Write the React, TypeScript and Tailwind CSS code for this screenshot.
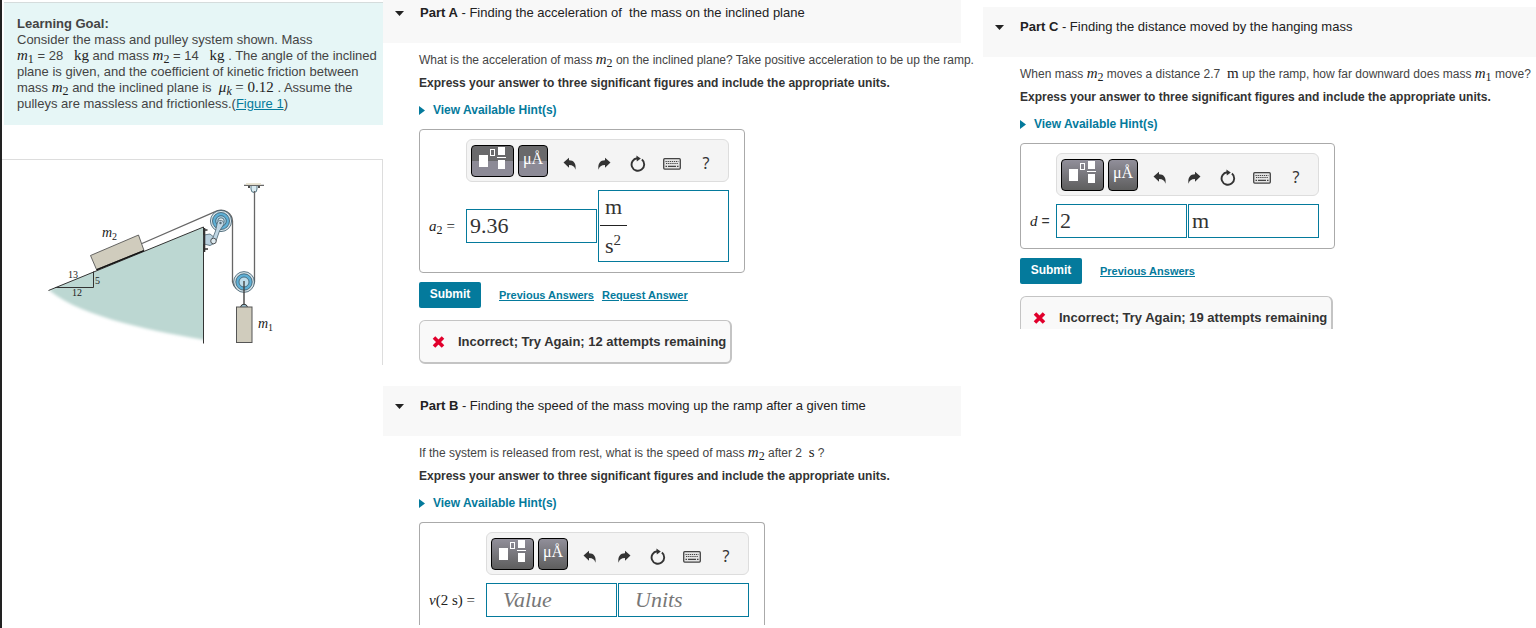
import type { ReactNode } from "react";

const MathText = ({ children }: { children: ReactNode }) => (
  <span className="font-['Liberation_Serif',serif] text-[15px] leading-none text-[#222]">
    {children}
  </span>
);

const Variable = ({ name, sub }: { name: string; sub?: ReactNode }) => (
  <span className="font-['Liberation_Serif',serif] text-[15px] leading-none text-[#222]">
    <i>{name}</i>
    {sub && <span className="relative top-[3px] text-[12px]">{sub}</span>}
  </span>
);

const UndoIcon = () => (
  <svg width="14" height="14" viewBox="0 0 14 14" fill="#333">
    <path d="M0.5 5.5 6 0.8V3.2C10.6 3.2 13.6 6.4 12.4 12.8 11.6 9.6 9.8 8.1 6 8.1V10.8Z" />
  </svg>
);

const RedoIcon = () => (
  <svg width="14" height="14" viewBox="0 0 14 14" fill="#333">
    <path d="M13.5 5.5 8 0.8V3.2C3.4 3.2 0.4 6.4 1.6 12.8 2.4 9.6 4.2 8.1 8 8.1V10.8Z" />
  </svg>
);

const ResetIcon = () => (
  <svg width="16" height="18" viewBox="0 0 16 18" fill="none">
    <path
      d="M11.9 4.6A6.3 6.3 0 1 1 7.2 3.2"
      stroke="#333"
      strokeWidth="1.9"
    />
    <path d="M6.4 0.4 10.8 3.4 6.8 6.4Z" fill="#333" />
  </svg>
);

const KeyboardIcon = () => (
  <svg width="18" height="12" viewBox="0 0 18 12" fill="none">
    <rect x="0.7" y="0.7" width="16.6" height="10.4" rx="1" fill="#e4e4e4" stroke="#444" strokeWidth="1.3" />
    <path d="M2.5 3.5H15.5M3 5.5H15.5" stroke="#444" strokeWidth="1.2" strokeDasharray="1.3 0.8" />
    <path d="M2.5 8.3H4M5 8.3H13M14 8.3H15.5" stroke="#444" strokeWidth="1.3" />
  </svg>
);

const TemplateIcon = () => (
  <svg width="28" height="24" viewBox="0 0 28 24" fill="none">
    <rect x="0" y="8" width="9" height="12" fill="#fff" />
    <rect x="11.5" y="2.5" width="4" height="6" stroke="#fff" />
    <rect x="19" y="0" width="7" height="8" fill="#fff" />
    <path d="M18 10.5H27" stroke="#fff" />
    <rect x="19" y="13" width="7" height="9" fill="#fff" />
  </svg>
);

const Toolbar = ({ active }: { active?: boolean }) => {
  const shade = active
    ? "bg-linear-to-b from-[#69696b] from-50% to-[#8c8a96] to-50%"
    : "bg-linear-to-b from-[#918f9a] to-[#5e5e5e]";
  return (
    <div className="flex h-[43px] w-[263px] items-center rounded-md border border-[#ddd] bg-[#f4f4f4] pl-1">
      <button
        aria-label="Templates"
        className={`mr-1 flex h-8 w-[43px] justify-center rounded border border-black pt-px ${shade}`}
      >
        <TemplateIcon />
      </button>
      <button
        aria-label="Symbols"
        className={`mr-[5px] h-8 w-[30px] rounded border border-black pb-1 font-['Liberation_Serif',serif] text-[16px] leading-[24px] text-white ${shade}`}
      >
        μÅ
      </button>
      {[
        { label: "Undo", icon: <UndoIcon /> },
        { label: "Redo", icon: <RedoIcon /> },
        { label: "Reset", icon: <ResetIcon /> },
        { label: "Keyboard shortcuts", icon: <KeyboardIcon /> },
      ].map(({ label, icon }) => (
        <button
          key={label}
          aria-label={label}
          className="flex h-8 w-[34px] items-center justify-center pt-[6px]"
        >
          {icon}
        </button>
      ))}
      <button
        aria-label="Help"
        className="h-8 w-[34px] pt-1 font-['Noto_Sans',sans-serif] text-[16px] leading-none text-[#333]"
      >
        ?
      </button>
    </div>
  );
};

const PartHeader = ({
  part,
  title,
  first,
}: {
  part: string;
  title: string;
  first?: boolean;
}) => (
  <header
    className={`flex items-center bg-[#f8f8f8] pb-[22px] pl-3 text-[13px] leading-4 whitespace-pre text-[#222] ${first ? "pt-[5px]" : "pt-3"}`}
  >
    <svg width="9" height="5" viewBox="0 0 9 5" className="mr-4">
      <path d="M0 0H9L4.5 5Z" fill="#222" />
    </svg>
    <h2>
      <b>{part}</b> - {title}
    </h2>
  </header>
);

const Instructions = ({ children }: { children: ReactNode }) => (
  <>
    <p className="mt-[9px] h-4 text-[12px] leading-4 whitespace-pre">{children}</p>
    <p className="mt-[7px] text-[12px] leading-4 font-bold whitespace-nowrap text-[#333]">
      Express your answer to three significant figures and include the
      appropriate units.
    </p>
    <button className="mt-[11px] flex items-center text-[12px] leading-4 font-bold text-[#047a9c]">
      <svg width="6" height="9" viewBox="0 0 6 9" className="mr-2">
        <path d="M0 0 6 4.5 0 9Z" fill="#047a9c" />
      </svg>
      View Available Hint(s)
    </button>
  </>
);

const AnswerField = ({
  id,
  label,
  labelWidth,
  value,
  unit,
  active,
  open,
}: {
  id: string;
  label: ReactNode;
  labelWidth: string;
  value?: string;
  unit?: ReactNode;
  active?: boolean;
  open?: boolean;
}) => {
  const box =
    "h-[34px] w-[131px] border border-[#047a9c] bg-white font-['Liberation_Serif',serif] text-[22px] text-[#333] outline-none placeholder:text-[#777] placeholder:italic placeholder:opacity-100";
  const pad = value ? "px-[3px]" : "px-4";
  return (
    <div
      className={`mt-[11px] grid w-fit grid-cols-[auto_auto] items-center gap-x-[7px] gap-y-2 border border-[#aaa] pt-[9px] pr-[15px] pl-[9px] ${open ? "rounded-t border-b-0 pb-2" : "rounded pb-[10px]"}`}
    >
      <div className="col-start-2">
        <Toolbar active={active} />
      </div>
      <label
        htmlFor={id}
        className={`text-[14px] leading-4 whitespace-nowrap text-[#333] ${labelWidth}`}
      >
        {label}
      </label>
      <div className="flex items-center gap-px">
        <input id={id} className={`${box} ${pad}`} defaultValue={value} placeholder="Value" />
        {typeof unit === "object" ? (
          unit
        ) : (
          <input
            aria-label="Units"
            className={`${box} ${pad}`}
            defaultValue={unit}
            placeholder="Units"
          />
        )}
      </div>
    </div>
  );
};

const FractionUnits = () => (
  <div
    role="textbox"
    aria-label="Units"
    tabIndex={0}
    className="h-[72px] w-[131px] border border-[#047a9c] px-px pt-1 font-['Liberation_Serif',serif] text-[22px] leading-[24px] text-[#333]"
  >
    <div className="w-fit border-b border-[#222] px-[5px] pb-[6px]">m</div>
    <div className="px-[5px] pt-2">
      s<span className="relative -top-2 text-[15px] leading-none">2</span>
    </div>
  </div>
);

const Actions = ({ links }: { links: string[] }) => (
  <div className="mt-[9px] flex items-center text-[#047a9c]">
    <button className="mr-[18px] h-[26px] w-[62px] rounded-xs bg-[#047a9c] pb-0.5 text-[12px] font-bold text-white">
      Submit
    </button>
    <div className="flex gap-2 text-[11px] leading-4 font-bold underline">
      {links.map((link) => (
        <a key={link} href="#">
          {link}
        </a>
      ))}
    </div>
  </div>
);

const Feedback = ({ attempts, cut }: { attempts: number; cut?: boolean }) => (
  <div
    className={`mt-3 flex w-[313px] items-center border border-[#c4c4c4] bg-[#f9f9f9] pl-3 text-[13px] font-bold whitespace-nowrap text-[#333] ${cut ? "h-[33px] rounded-t-md border-r-2 border-b-0 pt-[10px]" : "h-11 rounded-md border-r-2 border-b-2"}`}
  >
    <svg width="13" height="12" viewBox="0 0 13 12" className="mr-[13px]">
      <path d="M2 1.5 11 10.5M11 1.5 2 10.5" stroke="#e1002c" strokeWidth="3.6" />
    </svg>
    <p>Incorrect; Try Again; {attempts} attempts remaining</p>
  </div>
);

const PulleyFigure = () => (
  <svg
    width="260"
    height="200"
    viewBox="0 0 260 200"
    fill="none"
    className="mt-[10px] ml-7 font-['Liberation_Serif',serif]"
  >
    <defs>
      <filter id="soft" x="-10%" y="-10%" width="120%" height="120%">
        <feGaussianBlur stdDeviation="1.6" />
      </filter>
      <clipPath id="ramp">
        <path d="M18 120.5 173.5 57V180H0V120.5Z" />
      </clipPath>
    </defs>
    {/* Ramp */}
    <g clipPath="url(#ramp)">
      <path
        d="M20 119 180 50V171C130 162 55 149 20 121Z"
        fill="#bcd7d2"
        filter="url(#soft)"
      />
    </g>
    <path d="M18.5 120.5 173.5 57V173.5" stroke="#333" />
    <path d="M25 117.5H63.5V101.5" stroke="#333" />
    {/* Block on the ramp */}
    <path d="M60.5 85.5 108.5 65 114 80.5 66.5 99.5Z" fill="#d0ccbd" stroke="#444" strokeWidth="0.8" />
    <path d="M66.5 99.8 114 80.6" stroke="#111" strokeWidth="1.4" />
    {/* Ceiling mount */}
    <path d="M214 15.3H234" stroke="#444" />
    <path d="M216 14H231" stroke="#e4dec8" strokeWidth="1.6" />
    <path d="M219 16V18M229 16V18" stroke="#222" strokeWidth="1.6" />
    <path d="M221 16V19A3 3.5 0 0 0 227 19V16" fill="#d9eaf0" stroke="#567784" />
    {/* Rope */}
    <path d="M112 73.5 187 40.8A11.6 11.6 0 0 1 202.5 51V112A11.2 11.2 0 0 0 224.5 112V21" stroke="#666" strokeWidth="1.3" />
    {/* Pulleys */}
    <g stroke="#38586a" strokeWidth="0.8">
      <circle cx="191" cy="51" r="10.6" fill="#d7e4e9" />
      <circle cx="191" cy="51" r="8.5" fill="#5fb0d6" />
      <circle cx="191" cy="51" r="5.3" fill="#a4cfe3" />
      <circle cx="191" cy="51" r="3.2" fill="#e1edf1" />
      <circle cx="214" cy="112" r="10.4" fill="#d7e4e9" />
      <circle cx="214" cy="112" r="8.2" fill="#5fb0d6" />
      <circle cx="214" cy="112" r="5" fill="#bddceb" />
    </g>
    {/* Bracket */}
    <path d="M174 65 180 64 185 68V73L180 75.5 174 74Z" fill="#b9d1df" stroke="#4b6471" strokeWidth="0.8" />
    <path d="M182 70 185.5 61 187.5 52A3.5 3.5 0 0 1 194 54L189.5 61 186 71Z" fill="#bfd6e4" stroke="#4b6471" strokeWidth="0.8" />
    <circle cx="183.5" cy="71" r="2.8" fill="#dce9ef" stroke="#333" strokeWidth="0.8" />
    <circle cx="190.5" cy="53" r="1.2" fill="#536b77" />
    <path d="M174.5 58V82M174 60H177.5M174 79H178" stroke="#333" strokeWidth="1.6" />
    {/* Hanging block */}
    <path d="M210.5 137A3.6 3.6 0 0 1 217.5 137" fill="#9ac0d1" stroke="#333" />
    <path d="M214 111V134" stroke="#444" strokeWidth="1.4" />
    <rect x="206.5" y="137" width="15.5" height="35.5" fill="#d0ccbd" stroke="#555" />
    <g fill="#222" fontSize="10">
      <text x="38" y="108">13</text>
      <text x="42" y="126">12</text>
      <text x="65" y="114">5</text>
      <text x="72" y="67" fontSize="14" fontStyle="italic">m</text>
      <text x="82" y="70">2</text>
      <text x="228" y="158" fontSize="14" fontStyle="italic">m</text>
      <text x="238" y="161">1</text>
    </g>
  </svg>
);

export default function App() {
  return (
    <main className="grid min-h-screen grid-cols-[383px_minmax(0,578fr)_minmax(0,575fr)] items-start overflow-hidden bg-white font-['Liberation_Sans',sans-serif] text-[#444]">
      <aside className="min-h-screen border-l-2 border-[#222] pt-[2px]">
        <section className="ml-[2px] border-t border-[#d5dcdc] bg-[#e6f6f6] pt-[13px] pb-[13px] pl-[13px] text-[13px] leading-4 whitespace-nowrap">
          <h1 className="font-bold">Learning Goal:</h1>
          <div className="h-20 whitespace-pre">
            <p className="h-4">Consider the mass and pulley system shown. Mass</p>
            <p className="h-4">
              <Variable name="m" sub="1" /> = 28{"   "}
              <MathText>kg</MathText> and mass <Variable name="m" sub="2" /> = 14{"   "}
              <MathText>kg</MathText> . The angle of the inclined
            </p>
            <p className="h-4">plane is given, and the coefficient of kinetic friction between</p>
            <p className="h-4">
              mass <Variable name="m" sub="2" /> and the inclined plane is{"  "}
              <Variable name="μ" sub={<i>k</i>} />{" "}
              <MathText>= 0.12</MathText> . Assume the
            </p>
            <p className="h-4">
              pulleys are massless and frictionless.(
              <a href="#" className="text-[#047a9c] underline">Figure 1</a>)
            </p>
          </div>
        </section>
        <figure className="mt-[34px] h-[206px] border-t border-r border-[#ddd]">
          <PulleyFigure />
        </figure>
      </aside>

      <div>
        <section>
          <PartHeader
            part="Part A"
            title="Finding the acceleration of  the mass on the inclined plane"
            first
          />
          <div className="pl-9">
            <Instructions>
              What is the acceleration of mass <Variable name="m" sub="2" /> on the
              {" "}inclined plane? Take positive acceleration to be up the ramp.
            </Instructions>
            <AnswerField
              id="acceleration"
              label={<><Variable name="a" sub="2" /> <MathText>=</MathText></>}
              labelWidth="w-[30px]"
              value="9.36"
              unit={<FractionUnits />}
              active
            />
            <Actions links={["Previous Answers", "Request Answer"]} />
            <Feedback attempts={12} />
          </div>
        </section>
        <section className="mt-[22px]">
          <PartHeader
            part="Part B"
            title="Finding the speed of the mass moving up the ramp after a given time"
          />
          <div className="pl-9">
            <Instructions>
              If the system is released from rest, what is the speed of mass{" "}
              <Variable name="m" sub="2" /> after 2{"  "}
              <MathText>s</MathText> ?
            </Instructions>
            <AnswerField
              id="speed"
              label={<MathText><i>v</i>(2 s) =</MathText>}
              labelWidth="w-[50px]"
              open
            />
          </div>
        </section>
      </div>

      <section className="pt-[7px] pl-[22px]">
        <PartHeader
          part="Part C"
          title="Finding the distance moved by the hanging mass"
        />
        <div className="pl-[37px]">
          <Instructions>
            When mass <Variable name="m" sub="2" /> moves a distance 2.7{"  "}
            <MathText>m</MathText> up the ramp, how far downward does mass{" "}
            <Variable name="m" sub="1" /> move?
          </Instructions>
          <AnswerField
            id="distance"
            label={<><Variable name="d" /> =</>}
            labelWidth="w-[19px]"
            value="2"
            unit="m"
          />
          <Actions links={["Previous Answers"]} />
          <Feedback attempts={19} cut />
        </div>
      </section>
    </main>
  );
}
